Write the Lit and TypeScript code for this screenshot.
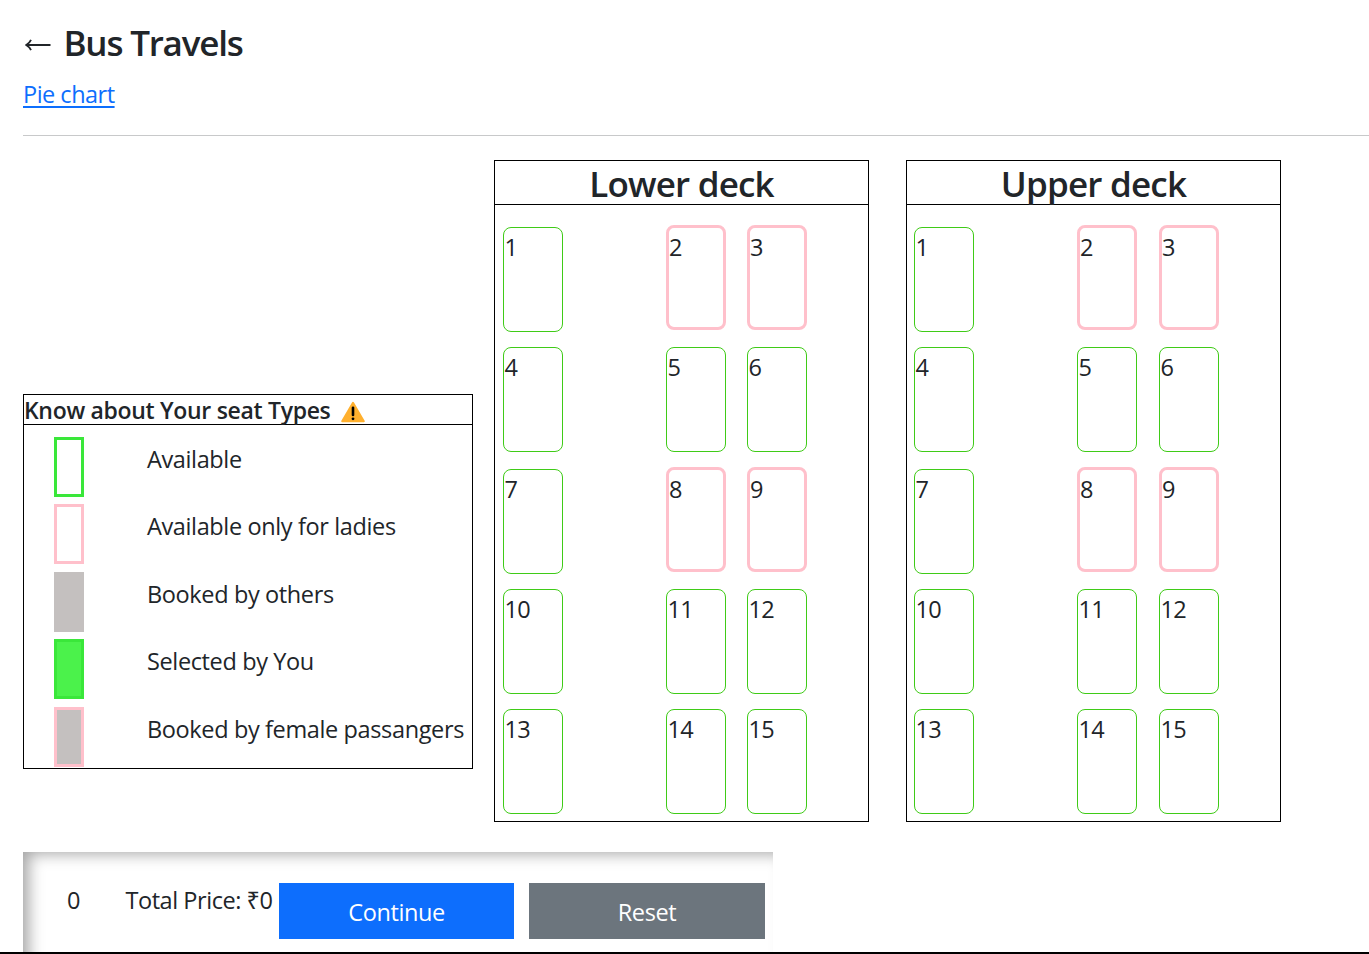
import { LitElement, html, css } from "lit";
import { customElement, property } from "lit/decorators.js";
import { classMap } from "lit/directives/class-map.js";

const LADIES = new Set([2, 3, 8, 9]);
const ROWS = [1, 4, 7, 10, 13];

@customElement("seat-deck")
class SeatDeck extends LitElement {
  @property() name = "";

  static styles = css`
    :host {
      display: block;
      box-sizing: border-box;
      width: 375px;
      height: 662px;
      border: 1px solid #000;
    }
    .name {
      height: 43px;
      margin: 0;
      border-bottom: 1px solid #000;
      font-size: 35px;
      font-weight: 600;
      line-height: 45px;
      letter-spacing: -0.8px;
      text-align: center;
    }
    .seats {
      display: grid;
      grid-template-columns: 163px 81px 60px;
      grid-template-rows: 120px 122px 120px 120px 105px;
      padding: 22px 0 0 8px;
    }
    :host([upper]) .seats {
      grid-template-columns: 163px 82px 60px;
      padding-left: 7px;
    }
    .seat {
      box-sizing: border-box;
      width: 60px;
      height: 105px;
      padding: 1px 0 0 0.4px;
      border: 1px solid #3fcb17;
      border-radius: 8px;
      line-height: 36px;
      letter-spacing: -0.6px;
    }
    .ladies {
      margin-top: -2px;
      padding-left: 0;
      border: 3px solid pink;
    }
  `;

  private seat(n: number) {
    return html`<div class=${classMap({ seat: true, ladies: LADIES.has(n) })}>${n}</div>`;
  }

  render() {
    return html`
      <h2 class="name">${this.name}</h2>
      <div class="seats">${ROWS.map((r) => [r, r + 1, r + 2].map((n) => this.seat(n)))}</div>
    `;
  }
}

@customElement("seat-legend")
class SeatLegend extends LitElement {
  static styles = css`
    :host {
      display: block;
      box-sizing: border-box;
      width: 450px;
      height: 375px;
      border: 1px solid #000;
    }
    .head {
      display: flex;
      align-items: center;
      height: 29px;
      border-bottom: 1px solid #000;
      font-size: 23px;
      font-weight: 600;
      letter-spacing: -0.31px;
      white-space: nowrap;
    }
    .warn {
      width: 24px;
      height: 22px;
      margin: 4px 0 0 11px;
    }
    .list {
      padding-top: 11.9px;
    }
    .row {
      display: flex;
      height: 67.5px;
      padding-left: 30px;
      white-space: nowrap;
    }
    .swatch {
      flex: none;
      box-sizing: border-box;
      width: 30px;
      height: 60px;
      margin-right: 63px;
      border: 3px solid transparent;
    }
    .available { border-color: #3ae73a; }
    .ladies { border-color: pink; }
    .booked { border-color: #c4c0bf; background: #c4c0bf; }
    .selected { border-color: #3ae73a; background: #4bf24b; }
    .female { border-color: pink; background: #c4c0bf; }
    .label {
      line-height: 44px;
      letter-spacing: -0.37px;
    }
  `;

  render() {
    const rows = [
      ["available", "Available"],
      ["ladies", "Available only for ladies"],
      ["booked", "Booked by others"],
      ["selected", "Selected by You"],
      ["female", "Booked by female passangers"],
    ];
    return html`
      <div class="head">
        <span>Know about Your seat Types</span>
        <svg class="warn" viewBox="0 0 24 22">
          <path d="M12 1.8 L22.8 20.2 H1.2 Z" fill="#ffb02e" stroke="#ffb02e" stroke-width="2" stroke-linejoin="round" />
          <path d="M12 6.8 V14" stroke="#000" stroke-width="2.6" stroke-linecap="round" />
          <circle cx="12" cy="17.8" r="1.4" fill="#000" />
        </svg>
      </div>
      <div class="list">
        ${rows.map(
          ([kind, label]) => html`<div class="row">
            <span class="swatch ${kind}"></span><span class="label">${label}</span>
          </div>`
        )}
      </div>
    `;
  }
}

@customElement("app-root")
class AppRoot extends LitElement {
  static styles = css`
    :host {
      display: flex;
      flex-direction: column;
      box-sizing: border-box;
      width: 100%;
      height: 954px;
      overflow: hidden;
      border-bottom: 2px solid #000;
      background: #fff;
      color: #212529;
      font-family: "Open Sans", "Noto Sans", sans-serif;
      font-size: 23.5px;
    }
    .top {
      flex: none;
      box-sizing: border-box;
      height: 136px;
      margin-left: 23px;
      padding-top: 18px;
      border-bottom: 1px solid #c8c9ca;
    }
    .title {
      display: flex;
      align-items: center;
      height: 48px;
      margin: 0;
      font-size: 35px;
      font-weight: 600;
      letter-spacing: -1.2px;
      white-space: nowrap;
    }
    .back {
      width: 26px;
      height: 14px;
      margin: 6px 12.5px 0 2px;
    }
    .link {
      display: inline-block;
      margin-top: 10px;
      color: #0d6efd;
      line-height: 36px;
      letter-spacing: -0.5px;
      text-decoration: underline;
      text-decoration-thickness: 2px;
      text-underline-offset: 3px;
    }
    .main {
      flex: none;
      display: flex;
      align-items: flex-start;
      height: 692px;
      padding: 24px 0 0 23px;
      box-sizing: border-box;
    }
    .legend {
      margin: 234px 21px 0 0;
    }
    .lower {
      margin-right: 37px;
    }
    .bar {
      flex: none;
      display: flex;
      align-items: flex-start;
      box-sizing: border-box;
      width: 750px;
      height: 140px;
      margin: 24px 0 0 23px;
      padding: 31px 8px 0 44px;
      box-shadow: inset 9px 5px 15px -3px rgba(0, 0, 0, 0.35);
    }
    .count {
      width: 58.5px;
      line-height: 34px;
    }
    .price {
      width: 153.5px;
      line-height: 34px;
      letter-spacing: -0.45px;
      white-space: nowrap;
    }
    .btn {
      width: 235px;
      height: 56px;
      margin: 0 15px 0 0;
      padding: 2px 0 0;
      border: 0;
      background: #0d6efd;
      color: #fff;
      font: inherit;
      letter-spacing: -0.4px;
    }
    .reset {
      width: 236px;
      margin: 0;
      background: #6c757d;
    }
  `;

  render() {
    return html`
      <header class="top">
        <h1 class="title">
          <svg class="back" viewBox="0 0 26 14" fill="none" stroke="#212529" stroke-width="1.8">
            <path d="M25.5 7 H1.5 M6 1.8 Q4.6 5 1.2 7 Q4.6 9 6 12.2" />
          </svg>
          <span>Bus Travels</span>
        </h1>
        <a class="link">Pie chart</a>
      </header>
      <main class="main">
        <seat-legend class="legend"></seat-legend>
        <seat-deck class="lower" name="Lower deck"></seat-deck>
        <seat-deck upper name="Upper deck"></seat-deck>
      </main>
      <footer class="bar">
        <span class="count">0</span>
        <span class="price">Total Price: ₹0</span>
        <button class="btn">Continue</button>
        <button class="btn reset">Reset</button>
      </footer>
    `;
  }
}
